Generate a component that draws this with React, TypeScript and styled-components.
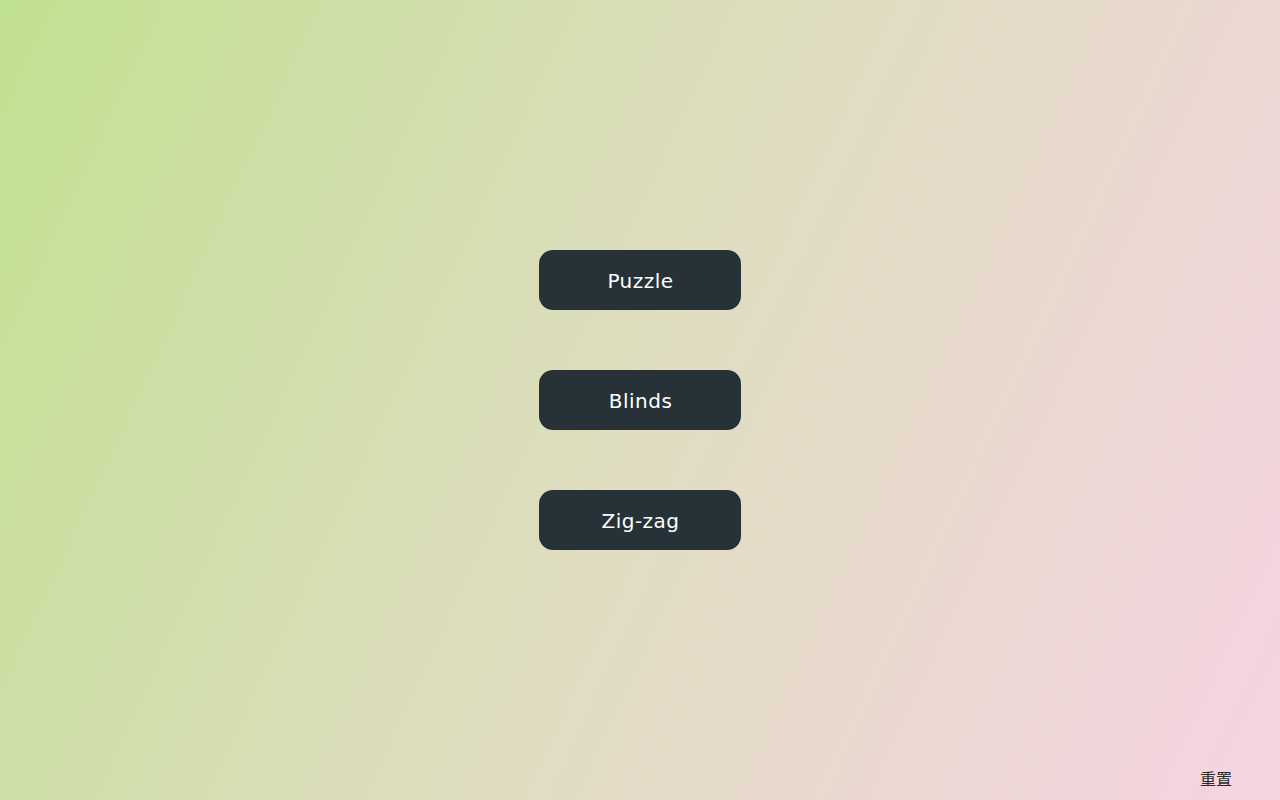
import React from "react";
import styled, { createGlobalStyle } from "styled-components";

const GlobalStyle = createGlobalStyle`
  html, body, #root {
    margin: 0;
    padding: 0;
    height: 100%;
  }
  body {
    font-family: "DejaVu Sans", "Noto Sans CJK SC", sans-serif;
  }
`;

const Page = styled.div`
  position: relative;
  width: 100%;
  height: 100vh;
  overflow: hidden;
  background: linear-gradient(115deg, #c1e192 0%, #dfddc0 50%, #f6d4e2 100%);
  display: flex;
  flex-direction: column;
  align-items: center;
  justify-content: center;
  gap: 60px;
`;

const EffectButton = styled.button`
  width: 202px;
  height: 60px;
  margin-right: 1px;
  border: none;
  border-radius: 14px;
  background-color: #263238;
  color: #ffffff;
  font-family: "DejaVu Sans", sans-serif;
  font-size: 20px;
  letter-spacing: 0.5px;
  padding: 2px 0 0 2px;
  cursor: pointer;
`;

const ResetButton = styled.button`
  position: absolute;
  right: 48px;
  bottom: 10px;
  border: none;
  background: transparent;
  padding: 0;
  color: #2a2a2a;
  font-family: "Noto Sans CJK SC", sans-serif;
  font-size: 16px;
  cursor: pointer;
`;

const effects = ["Puzzle", "Blinds", "Zig-zag"];

export default function App() {
  return (
    <>
      <GlobalStyle />
      <Page>
        {effects.map((name) => (
          <EffectButton key={name}>{name}</EffectButton>
        ))}
        <ResetButton>重置</ResetButton>
      </Page>
    </>
  );
}
